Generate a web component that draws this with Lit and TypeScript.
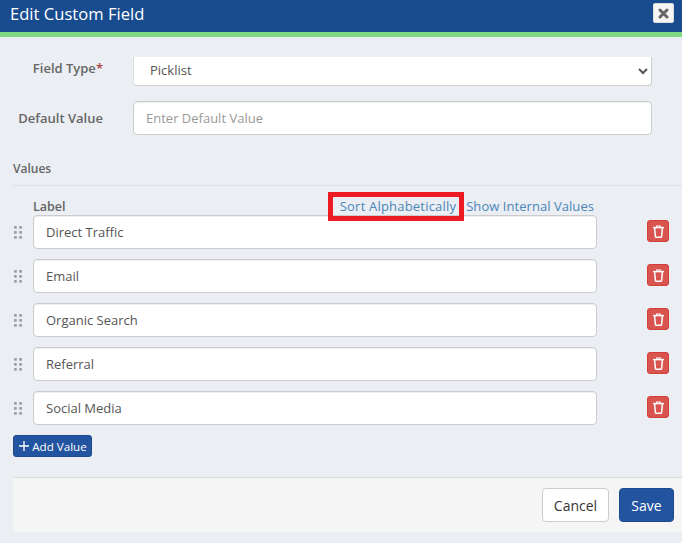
import { LitElement, html, css, svg } from "lit";
import { customElement } from "lit/decorators.js";

const VALUES = ["Direct Traffic", "Email", "Organic Search", "Referral", "Social Media"];

const grip = html`<svg class="grip" width="8" height="13" viewBox="0 0 8 13">
  ${[0, 5, 10].map((y) => [0, 5.2].map((x) => svg`<rect x=${x} y=${y} width="2.8" height="2.8" rx=".7" fill="#9a9ea6"></rect>`))}
</svg>`;

const trash = html`<svg width="11" height="13" viewBox="0 0 11 13" fill="none" stroke="#fff" stroke-width="1.5">
  <path d="M0 2.6h11" /><path d="M3.6 2.6V1h3.8v1.6" stroke-width="1.1" /><path d="M1.6 2.6l.8 9c0 .4.3.6.6.6h5c.3 0 .6-.2.6-.6l.8-9" />
</svg>`;

@customElement("app-root")
export class AppRoot extends LitElement {
  static styles = css`
    :host {
      display: block;
      position: relative;
      width: 682px;
      height: 543px;
      overflow: hidden;
      background: #ebeef3;
      font-family: "Open Sans", "Noto Sans", sans-serif;
      font-size: 14px;
      color: #555;
    }
    * { box-sizing: border-box; }
    .head {
      height: 37px;
      background: #194c8f;
      border-bottom: 5px solid #7fd882;
      display: flex;
      align-items: center;
      justify-content: space-between;
      padding: 0 8px 0 10px;
    }
    .title { color: #fff; font-size: 16.6px; line-height: 28px; margin-top: -4px; }
    .close {
      width: 21px; height: 20px; margin-top: -6px;
      background: #f5f5f5; border: 1px solid #ddd; border-radius: 2px;
      padding: 0; display: flex; align-items: center; justify-content: center;
    }
    .close svg { margin-top: 1px; }
    .body { padding: 20px 0 0 13px; }
    .row { display: flex; align-items: flex-start; padding-right: 30px; }
    .row + .row { margin-top: 15px; }
    .lbl {
      width: 120px; padding-right: 30px; text-align: right;
      font-weight: 600; color: #666; font-size: 13px; line-height: 22px;
    }
    .row.dv .lbl { line-height: 34px; white-space: nowrap; }
    .star { color: #a94442; }
    select, input {
      font: inherit; color: #555; background: #fff;
      border: 1px solid #ccc; border-radius: 4px; outline: none; display: block;
    }
    select {
      flex: 1; min-width: 0; height: 29px; padding: 0 0 2px 12px;
      border-top: 0; border-left-color: #ddd; border-top-left-radius: 0; border-top-right-radius: 0;
      font-size: 13px;
    }
    input {
      flex: 1; min-width: 0; height: 34px; padding: 0 12px; font-size: 13px;
      box-shadow: inset 0 1px 1px rgba(0, 0, 0, .075);
    }
    input::placeholder { color: #999; opacity: 1; }
    .section {
      margin-top: 24px; font-weight: 600; font-size: 12px; color: #666;
      line-height: 20px; padding-bottom: 6px; border-bottom: 1px solid #dcdfe4;
    }
    .colhead {
      display: flex; justify-content: space-between; align-items: flex-end;
      padding: 0 88px 0 20px; height: 29px;
    }
    .colhead b { font-weight: 600; font-size: 12.5px; color: #666; line-height: 16px; }
    .links { display: flex; gap: 10px; font-size: 13px; line-height: 18px; color: #4a86b8; }
    .sort { letter-spacing: .2px; }
    .show { letter-spacing: .05px; }
    .values { display: flex; flex-direction: column; gap: 10px; }
    .val { display: flex; align-items: center; }
    .grip { margin: 0 11px 0 1px; flex: none; }
    .val input { flex: none; width: 564px; color: #555; }
    .del {
      width: 22px; height: 22px; margin: 0 0 2px 50px; padding: 0;
      background: #d9534f; border: 1px solid #d43f3a; border-radius: 3px;
      display: flex; align-items: center; justify-content: center;
    }
    .add {
      margin-top: 10px; height: 22px; width: 79px; padding: 0 0 0 1px;
      background: #23549f; border: 1px solid #1d4a8e; border-radius: 3px;
      color: #fff; font: inherit; font-size: 11.6px;
      display: flex; align-items: center; justify-content: center; gap: 3px;
    }
    .foot {
      margin-top: 20px; height: 55px; background: #f5f5f5; border-top: 1px solid #ddd;
      display: flex; justify-content: flex-end; align-items: center; gap: 10px; padding-right: 8px;
    }
    .btn {
      height: 34px; border-radius: 4px; font: inherit; font-size: 14px; padding: 0;
    }
    .cancel { width: 67px; background: #fff; border: 1px solid #ccc; color: #333; }
    .save { width: 55px; background: #23549f; border: 1px solid #1d4a8e; color: #fff; }
    .mark {
      position: absolute; left: 328px; top: 192px; width: 136px; height: 29px;
      border: 5px solid #ed1c24; pointer-events: none;
    }
  `;

  render() {
    return html`
      <div class="head">
        <span class="title">Edit Custom Field</span>
        <button class="close" aria-label="Close">
          <svg width="11" height="11" viewBox="0 0 11 11" stroke="#666" stroke-width="3" stroke-linecap="round">
            <path d="M2 2l7 7M9 2l-7 7" />
          </svg>
        </button>
      </div>
      <div class="body">
        <div class="row ft">
          <div class="lbl">Field Type<span class="star">*</span></div>
          <select><option>Picklist</option></select>
        </div>
        <div class="row dv">
          <div class="lbl">Default Value</div>
          <input placeholder="Enter Default Value" />
        </div>
        <div class="section">Values</div>
        <div class="colhead">
          <b>Label</b>
          <div class="links"><span class="sort">Sort Alphabetically</span><span class="show">Show Internal Values</span></div>
        </div>
        <div class="values">
          ${VALUES.map(
            (v) => html`<div class="val">
              ${grip}
              <input .value=${v} />
              <button class="del" aria-label="Delete">${trash}</button>
            </div>`
          )}
        </div>
        <button class="add">
          <svg width="10" height="10" viewBox="0 0 10 10" stroke="#fff" stroke-width="1.3"><path d="M5 0v10M0 5h10" /></svg>
          Add Value
        </button>
        <div class="foot">
          <button class="btn cancel">Cancel</button>
          <button class="btn save">Save</button>
        </div>
      </div>
      <div class="mark"></div>
    `;
  }
}
